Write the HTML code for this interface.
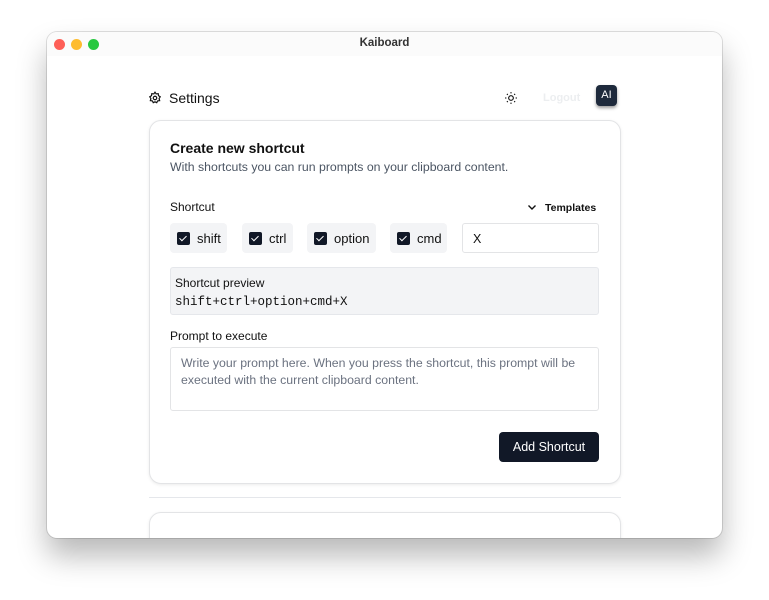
<!DOCTYPE html>
<html><head><style>
*{box-sizing:border-box;margin:0;padding:0}
body{width:769px;height:600px;background:#fff;font-family:"Liberation Sans",sans-serif;position:relative;overflow:hidden}
.win{position:absolute;left:47px;top:32px;width:675px;height:506px;background:#fff;border-radius:10px;box-shadow:0 18px 30px rgba(0,0,0,.28),0 0 0 1px rgba(0,0,0,.12);overflow:hidden}
.tb{height:24px;background:#fbfbfb;text-align:center;font-size:11.5px;font-weight:bold;color:#333;line-height:23px}
.dot{position:absolute;top:7px;width:11px;height:11px;border-radius:50%}
.a{position:absolute}
.card{border:1px solid #e3e4e6;border-radius:12px;box-shadow:0 1px 3px rgba(0,0,0,.08);background:#fff}
.chip{background:#f3f4f6;border-radius:4px;height:30px;font-size:13px;color:#111;line-height:31px;padding-left:7px}
.cb{display:inline-block;width:13px;height:13px;background:#111827;border-radius:2px;vertical-align:-2px;margin-right:7px;position:relative}
.cb:after{content:"";position:absolute;left:4px;top:2px;width:3px;height:6px;border:solid #fff;border-width:0 1.2px 1.2px 0;transform:rotate(45deg)}
</style></head><body>
<div class="win">
<div class="tb">Kaiboard</div>
<div class="dot" style="left:7px;background:#fe5f57"></div>
<div class="dot" style="left:24px;background:#febc2e"></div>
<div class="dot" style="left:41px;background:#28c840"></div>
</div>
<svg class="a" style="left:148px;top:91px" width="14" height="14" viewBox="0 0 24 24" fill="none" stroke="#111" stroke-width="2"><circle cx="12" cy="12" r="3"/><path d="M12 2l2 3 3.5-.5.5 3.5 3 2-2 3 1 3.5-3.5.5-1.5 3-3-1.5-3 1.5-1.5-3-3.5-.5 1-3.5-2-3 3-2 .5-3.5L10 5z"/></svg>
<div class="a" style="left:169px;top:90px;font-size:14px;color:#111">Settings</div>
<svg class="a" style="left:504px;top:91px" width="14" height="14" viewBox="0 0 24 24" fill="none" stroke="#111" stroke-width="2"><circle cx="12" cy="12" r="4"/><path d="M12 2v2M12 20v2M2 12h2M20 12h2M5 5l1.5 1.5M17.5 17.5L19 19M5 19l1.5-1.5M17.5 6.5L19 5"/></svg>
<div class="a" style="left:543px;top:92px;font-size:11px;color:#eceef0;font-weight:bold">Logout</div>
<div class="a" style="left:596px;top:85px;width:21px;height:21px;background:#1e2a3c;border-radius:4px;color:#fff;font-size:11px;text-align:center;line-height:21px;box-shadow:0 2px 3px rgba(0,0,0,.4)">AI</div>
<div class="a card" style="left:149px;top:120px;width:472px;height:364px"></div>
<div class="a" style="left:170px;top:140px;font-size:14px;font-weight:bold;color:#111">Create new shortcut</div>
<div class="a" style="left:170px;top:160px;font-size:12.3px;color:#4b5563">With shortcuts you can run prompts on your clipboard content.</div>
<div class="a" style="left:170px;top:200px;font-size:12px;color:#111">Shortcut</div>
<svg class="a" style="left:527px;top:204px" width="10" height="7" viewBox="0 0 10 7" fill="none" stroke="#111" stroke-width="1.4"><path d="M1.5 1.5L5 5l3.5-3.5"/></svg>
<div class="a" style="left:545px;top:202px;font-size:10.5px;color:#111;font-weight:bold">Templates</div>
<div class="a chip" style="left:170px;top:223px;width:57px"><span class="cb"></span>shift</div>
<div class="a chip" style="left:242px;top:223px;width:51px"><span class="cb"></span>ctrl</div>
<div class="a chip" style="left:307px;top:223px;width:69px"><span class="cb"></span>option</div>
<div class="a chip" style="left:390px;top:223px;width:57px"><span class="cb"></span>cmd</div>
<div class="a" style="left:462px;top:223px;width:137px;height:30px;border:1px solid #e3e4e6;border-radius:3px;font-size:12.5px;line-height:30px;padding-left:10px;color:#111">X</div>
<div class="a" style="left:170px;top:267px;width:429px;height:48px;background:#f3f4f6;border:1px solid #e5e7eb;border-radius:3px;padding:8px 0 0 4px">
<div style="font-size:12px;color:#111">Shortcut preview</div>
<div style="font-family:'Liberation Mono',monospace;font-size:12.5px;color:#111;margin-top:5px">shift+ctrl+option+cmd+X</div></div>
<div class="a" style="left:170px;top:329px;font-size:12px;color:#111">Prompt to execute</div>
<div class="a" style="left:170px;top:347px;width:429px;height:64px;border:1px solid #e3e4e6;border-radius:3px;padding:7px 10px;font-size:12.3px;line-height:17px;color:#6b7280">Write your prompt here. When you press the shortcut, this prompt will be executed with the current clipboard content.</div>
<div class="a" style="left:499px;top:432px;width:100px;height:30px;background:#111827;border-radius:4px;color:#fff;font-size:12.5px;text-align:center;line-height:30px">Add Shortcut</div>
<div class="a" style="left:149px;top:497px;width:472px;height:1px;background:#e5e7eb"></div>
<div class="a card" style="left:149px;top:512px;width:472px;height:60px;clip-path:inset(-5px -5px 34px -5px)"></div>
</body></html>
